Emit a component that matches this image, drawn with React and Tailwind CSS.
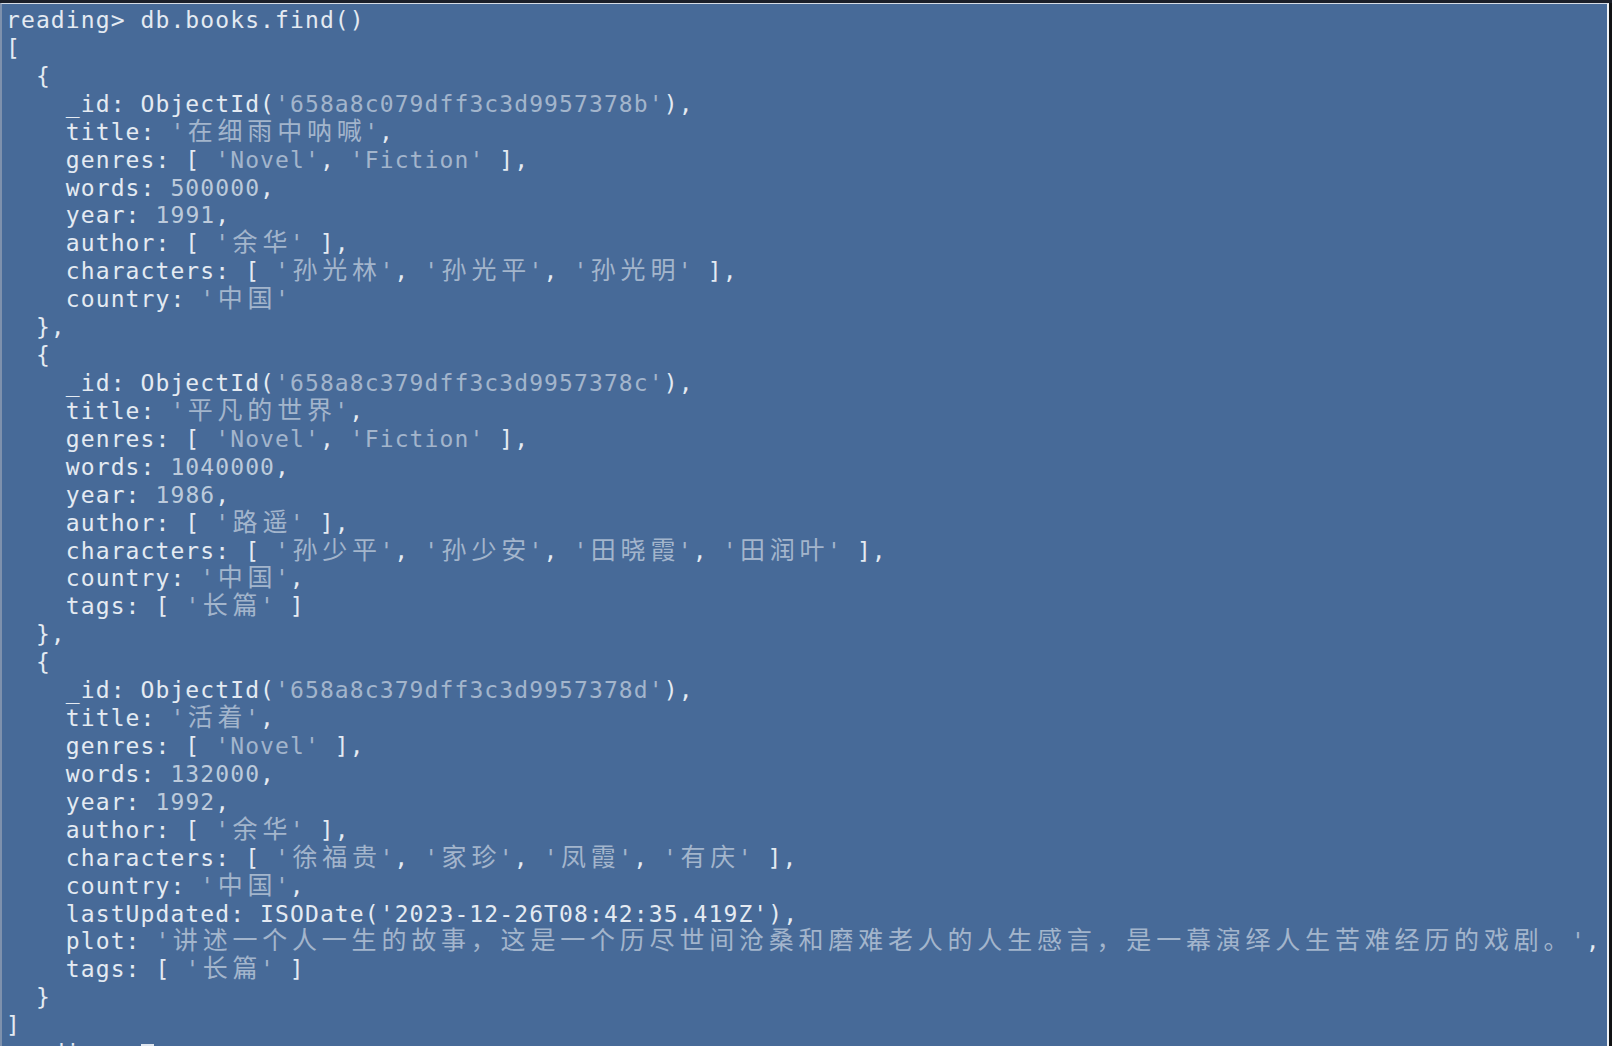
import React from 'react';

const lines = [
  "reading> db.books.find()",
  "[",
  "  {",
  "    _id: ObjectId('658a8c079dff3c3d9957378b'),",
  "    title: '在细雨中呐喊',",
  "    genres: [ 'Novel', 'Fiction' ],",
  "    words: 500000,",
  "    year: 1991,",
  "    author: [ '余华' ],",
  "    characters: [ '孙光林', '孙光平', '孙光明' ],",
  "    country: '中国'",
  "  },",
  "  {",
  "    _id: ObjectId('658a8c379dff3c3d9957378c'),",
  "    title: '平凡的世界',",
  "    genres: [ 'Novel', 'Fiction' ],",
  "    words: 1040000,",
  "    year: 1986,",
  "    author: [ '路遥' ],",
  "    characters: [ '孙少平', '孙少安', '田晓霞', '田润叶' ],",
  "    country: '中国',",
  "    tags: [ '长篇' ]",
  "  },",
  "  {",
  "    _id: ObjectId('658a8c379dff3c3d9957378d'),",
  "    title: '活着',",
  "    genres: [ 'Novel' ],",
  "    words: 132000,",
  "    year: 1992,",
  "    author: [ '余华' ],",
  "    characters: [ '徐福贵', '家珍', '凤霞', '有庆' ],",
  "    country: '中国',",
  "    lastUpdated: ISODate('2023-12-26T08:42:35.419Z'),",
  "    plot: '讲述一个人一生的故事，这是一个历尽世间沧桑和磨难老人的人生感言，是一幕演绎人生苦难经历的戏剧。',",
  "    tags: [ '长篇' ]",
  "  }",
  "]",
  "reading> ",
];

const isWide = (ch) => /[\u2e80-\uffef]/.test(ch);

// terminal cells: CJK glyphs take two columns
function Cells({ text }) {
  const out = [];
  let run = '';
  [...text].forEach((ch, i) => {
    if (isWide(ch)) {
      if (run) { out.push(run); run = ''; }
      out.push(
        <span key={i} className="inline-block w-[29.8px] text-center tracking-normal text-[25px] leading-none">{ch}</span>
      );
    } else {
      run += ch;
    }
  });
  if (run) out.push(run);
  return <>{out}</>;
}

function Line({ text, cursor }) {
  const parts = text.split(/('[^']*'|\b\d+\b)/);
  return (
    <div className="h-[27.93px] whitespace-pre">
      {parts.map((p, i) => {
        if (!p) return null;
        let cls = 'text-[#e4eaf2]';
        if (p.startsWith("'")) {
          cls = parts[i - 1] && parts[i - 1].endsWith('ISODate(') ? 'text-[#e4eaf2]' : 'text-[#a3b5cc]';
        } else if (/^\d+$/.test(p)) {
          cls = 'text-[#bccadb]';
        }
        return (
          <span key={i} className={cls}>
            <Cells text={p} />
          </span>
        );
      })}
      {cursor && <span className="inline-block w-[13px] h-[22px] bg-[#dfe6ef] align-middle" />}
    </div>
  );
}

export default function App() {
  return (
    <div className="w-full h-[1046px] overflow-hidden bg-[#14161b] flex flex-col">
      <div className="h-[3px] bg-[#1b1f29] shrink-0" />
      <div className="flex-1 min-h-0 flex">
        <div className="flex-1 min-w-0 overflow-hidden bg-[#476a98] border-t border-t-[#d5dce6] border-l-2 border-l-[#7e91ad] border-r-2 border-r-[#eef2f6] pl-[4px] pt-[3px] font-['DejaVu_Sans_Mono','Noto_Sans_CJK_SC',monospace] text-[23px] leading-[27.93px] tracking-[1.1px]">
          {lines.map((l, i) => (
            <Line key={i} text={l} cursor={i === lines.length - 1} />
          ))}
        </div>
        <div className="w-[3px] bg-[#111214] shrink-0" />
      </div>
    </div>
  );
}
